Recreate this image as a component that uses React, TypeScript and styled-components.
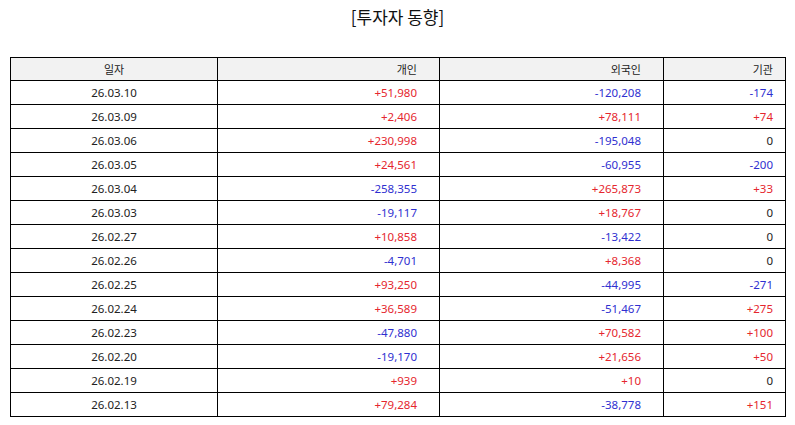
import styled, { createGlobalStyle } from "styled-components";

const GlobalStyle = createGlobalStyle`
  html, body {
    margin: 0;
    padding: 0;
    background: #ffffff;
    font-family: "Noto Sans", "Noto Sans CJK KR", sans-serif;
  }
`;

const Page = styled.div`
  width: 795px;
  padding: 6px 10px 0;
  box-sizing: border-box;
`;

const Title = styled.h1`
  margin: 0 0 29px;
  font-family: "Noto Sans CJK KR", sans-serif;
  font-size: 17px;
  font-weight: 400;
  line-height: 22px;
  color: #111;
  text-align: center;
`;

const Table = styled.table`
  width: 775px;
  border-collapse: collapse;
  table-layout: fixed;
  font-size: 11.5px;
  color: #222;
`;

const HeadCell = styled.th<{ $align: "center" | "right"; $pad: number }>`
  height: 22px;
  padding: 0 ${(p) => p.$pad}px 0 0;
  border: 1.5px solid #000;
  background: #f2f2f2;
  font-family: "Noto Sans CJK KR", sans-serif;
  font-size: 11px;
  font-weight: 400;
  color: #222;
  text-align: ${(p) => p.$align};
  line-height: 1;
`;

const Cell = styled.td<{ $align: "center" | "right"; $pad: number; $tone: "up" | "down" | "flat" }>`
  height: 23px;
  padding: 0 ${(p) => p.$pad}px 0 0;
  border: 1.5px solid #000;
  text-align: ${(p) => p.$align};
  line-height: 1;
  color: ${(p) => (p.$tone === "up" ? "#e5262e" : p.$tone === "down" ? "#2f2fd0" : "#222")};
`;

const columns = [
  { label: "일자", width: 207, align: "center" as const, pad: 0 },
  { label: "개인", width: 222, align: "right" as const, pad: 22 },
  { label: "외국인", width: 224, align: "right" as const, pad: 22 },
  { label: "기관", width: 122, align: "right" as const, pad: 12 },
];

const rows: [string, string, string, string][] = [
  ["26.03.10", "+51,980", "-120,208", "-174"],
  ["26.03.09", "+2,406", "+78,111", "+74"],
  ["26.03.06", "+230,998", "-195,048", "0"],
  ["26.03.05", "+24,561", "-60,955", "-200"],
  ["26.03.04", "-258,355", "+265,873", "+33"],
  ["26.03.03", "-19,117", "+18,767", "0"],
  ["26.02.27", "+10,858", "-13,422", "0"],
  ["26.02.26", "-4,701", "+8,368", "0"],
  ["26.02.25", "+93,250", "-44,995", "-271"],
  ["26.02.24", "+36,589", "-51,467", "+275"],
  ["26.02.23", "-47,880", "+70,582", "+100"],
  ["26.02.20", "-19,170", "+21,656", "+50"],
  ["26.02.19", "+939", "+10", "0"],
  ["26.02.13", "+79,284", "-38,778", "+151"],
];

const toneOf = (v: string) => (v.startsWith("+") ? "up" : v.startsWith("-") ? "down" : "flat");

export default function App() {
  return (
    <>
      <GlobalStyle />
      <Page>
        <Title>[투자자 동향]</Title>
        <Table>
          <colgroup>
            {columns.map((c) => (
              <col key={c.label} style={{ width: c.width }} />
            ))}
          </colgroup>
          <thead>
            <tr>
              {columns.map((c) => (
                <HeadCell key={c.label} $align={c.align} $pad={c.pad}>
                  {c.label}
                </HeadCell>
              ))}
            </tr>
          </thead>
          <tbody>
            {rows.map((r) => (
              <tr key={r[0]}>
                {r.map((v, i) => (
                  <Cell
                    key={i}
                    $align={columns[i].align}
                    $pad={columns[i].pad}
                    $tone={i === 0 ? "flat" : toneOf(v)}
                  >
                    {v}
                  </Cell>
                ))}
              </tr>
            ))}
          </tbody>
        </Table>
      </Page>
    </>
  );
}
